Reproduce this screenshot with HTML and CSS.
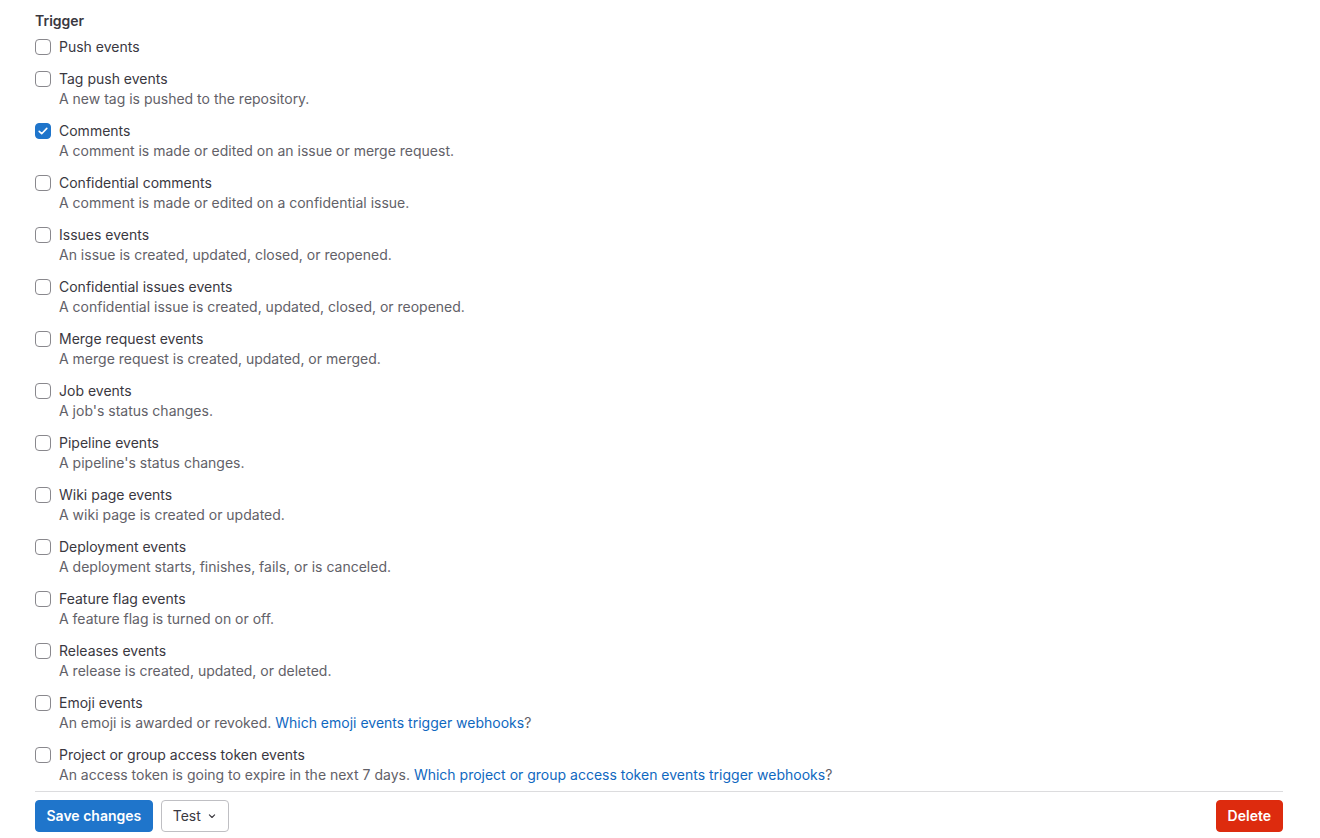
FILE: index.html
```html
<!DOCTYPE html>
<html lang="en">
<head>
<meta charset="utf-8">
<title>Webhook triggers</title>
<link rel="stylesheet" href="styles.css">
</head>
<body>
<form class="page">
  <fieldset class="triggers">
    <legend class="section-label">Trigger</legend>

    <div class="check">
      <span class="box"></span>
      <div class="check-text"><div class="label">Push events</div></div>
    </div>

    <div class="check">
      <span class="box"></span>
      <div class="check-text"><div class="label">Tag push events</div><div class="help">A new tag is pushed to the repository.</div></div>
    </div>

    <div class="check">
      <span class="box checked"><svg viewBox="0 0 16 16" width="16" height="16"><path d="M4.2 8.3l2.5 2.4 5.1-5.3" fill="none" stroke="#fff" stroke-width="1.6" stroke-linecap="round" stroke-linejoin="round"/></svg></span>
      <div class="check-text"><div class="label">Comments</div><div class="help">A comment is made or edited on an issue or merge request.</div></div>
    </div>

    <div class="check">
      <span class="box"></span>
      <div class="check-text"><div class="label">Confidential comments</div><div class="help">A comment is made or edited on a confidential issue.</div></div>
    </div>

    <div class="check">
      <span class="box"></span>
      <div class="check-text"><div class="label">Issues events</div><div class="help">An issue is created, updated, closed, or reopened.</div></div>
    </div>

    <div class="check">
      <span class="box"></span>
      <div class="check-text"><div class="label">Confidential issues events</div><div class="help">A confidential issue is created, updated, closed, or reopened.</div></div>
    </div>

    <div class="check">
      <span class="box"></span>
      <div class="check-text"><div class="label">Merge request events</div><div class="help">A merge request is created, updated, or merged.</div></div>
    </div>

    <div class="check">
      <span class="box"></span>
      <div class="check-text"><div class="label">Job events</div><div class="help">A job's status changes.</div></div>
    </div>

    <div class="check">
      <span class="box"></span>
      <div class="check-text"><div class="label">Pipeline events</div><div class="help">A pipeline's status changes.</div></div>
    </div>

    <div class="check">
      <span class="box"></span>
      <div class="check-text"><div class="label">Wiki page events</div><div class="help">A wiki page is created or updated.</div></div>
    </div>

    <div class="check">
      <span class="box"></span>
      <div class="check-text"><div class="label">Deployment events</div><div class="help">A deployment starts, finishes, fails, or is canceled.</div></div>
    </div>

    <div class="check">
      <span class="box"></span>
      <div class="check-text"><div class="label">Feature flag events</div><div class="help">A feature flag is turned on or off.</div></div>
    </div>

    <div class="check">
      <span class="box"></span>
      <div class="check-text"><div class="label">Releases events</div><div class="help">A release is created, updated, or deleted.</div></div>
    </div>

    <div class="check">
      <span class="box"></span>
      <div class="check-text"><div class="label">Emoji events</div><div class="help">An emoji is awarded or revoked. <a href="#" class="link">Which emoji events trigger webhooks</a>?</div></div>
    </div>

    <div class="check last">
      <span class="box"></span>
      <div class="check-text"><div class="label">Project or group access token events</div><div class="help">An access token is going to expire in the next 7 days. <a href="#" class="link">Which project or group access token events trigger webhooks</a>?</div></div>
    </div>
  </fieldset>

  <div class="actions">
    <div class="actions-left">
      <button type="button" class="btn btn-confirm">Save changes</button>
      <button type="button" class="btn btn-default">Test <svg class="chev" viewBox="0 0 16 16" width="12" height="12"><path d="M4.5 6.5L8 10l3.5-3.5" fill="none" stroke="#3a383f" stroke-width="1.5" stroke-linecap="round" stroke-linejoin="round"/></svg></button>
    </div>
    <button type="button" class="btn btn-danger">Delete</button>
  </div>
</form>
</body>
</html>
```

FILE: styles.css
```css
* { box-sizing: border-box; }

html, body {
  margin: 0;
  padding: 0;
  background: #fff;
}

body {
  font-family: Inter, "Noto Sans", "Liberation Sans", sans-serif;
  font-size: 14px;
  line-height: 20px;
  color: #3a383f;
}

.page {
  padding: 11px 37px 0 35px;
}

.triggers {
  border: 0;
  margin: 0;
  padding: 0;
  display: flex;
  flex-direction: column;
}

.section-label {
  padding: 0;
  font-weight: 600;
  color: #3a383f;
  margin-bottom: 6px;
  line-height: 20px;
}

.check {
  display: flex;
  gap: 8px;
  margin-bottom: 12px;
}

.check.last {
  margin-bottom: 6px;
}

.box {
  flex: none;
  width: 16px;
  height: 16px;
  margin-top: 2px;
  border: 1px solid #89888d;
  border-radius: 4px;
  background: #fff;
  display: flex;
  align-items: center;
  justify-content: center;
}

.box.checked {
  background: #1f75cb;
  border-color: #1f75cb;
}

.box svg { display: block; flex: none; }

.label {
  color: #3a383f;
}

.help {
  color: #626168;
}

.link {
  color: #1068bf;
  text-decoration: none;
}

.actions {
  border-top: 1px solid #dcdcde;
  padding-top: 8px;
  display: flex;
  justify-content: space-between;
  align-items: center;
}

.actions-left {
  display: flex;
  gap: 8px;
}

.btn {
  font-family: inherit;
  font-size: 14px;
  line-height: 16px;
  height: 32px;
  padding: 8px 12px;
  border-radius: 4px;
  border: 1px solid transparent;
  display: inline-flex;
  align-items: center;
  cursor: pointer;
}

.btn-confirm {
  background: #1f75cb;
  border-color: #1f75cb;
  color: #fff;
  font-weight: 600;
  padding: 8px 10.5px;
}

.btn-default {
  background: #fff;
  border-color: #bfbfc3;
  color: #3a383f;
  gap: 5px;
  padding: 8px 10px 8px 11px;
}

.btn-danger {
  background: #dd2b0e;
  border-color: #dd2b0e;
  color: #fff;
  font-weight: 600;
  padding: 8px 11px;
}

.chev { display: block; }
```
